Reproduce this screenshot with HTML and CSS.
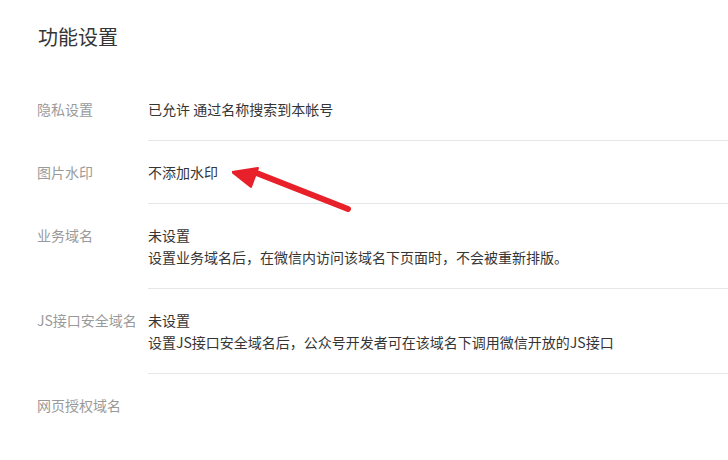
FILE: index.html
```html
<!DOCTYPE html>
<html lang="zh-CN">
<head>
  <meta charset="UTF-8" />
  <title>功能设置</title>
  <link rel="stylesheet" href="styles.css">
</head>
<body>
  <main class="page">
    <h2 class="page-title">功能设置</h2>

    <ul class="setting-list">
      <li class="setting-item">
        <span class="setting-label">隐私设置</span>
        <div class="setting-value">
          <p>已允许 通过名称搜索到本帐号</p>
        </div>
      </li>
      <li class="setting-item">
        <span class="setting-label">图片水印</span>
        <div class="setting-value">
          <p>不添加水印</p>
        </div>
        <!-- annotation arrow -->
        <svg class="mark-arrow" width="130" height="50" viewBox="0 0 130 50">
          <line x1="22" y1="9" x2="116" y2="46" stroke="#e8202a" stroke-width="6" stroke-linecap="round" />
          <polygon points="0,9 26,5 19,24" fill="#e8202a" stroke="#e8202a" stroke-width="2" stroke-linejoin="round" />
        </svg>
      </li>
      <li class="setting-item">
        <span class="setting-label">业务域名</span>
        <div class="setting-value">
          <p>未设置</p>
          <p>设置业务域名后，在微信内访问该域名下页面时，不会被重新排版。</p>
        </div>
      </li>
      <li class="setting-item">
        <span class="setting-label">JS接口安全域名</span>
        <div class="setting-value">
          <p>未设置</p>
          <p>设置JS接口安全域名后，公众号开发者可在该域名下调用微信开放的JS接口</p>
        </div>
      </li>
      <li class="setting-item last">
        <span class="setting-label">网页授权域名</span>
        <div class="setting-value"></div>
      </li>
    </ul>
  </main>
</body>
</html>
```

FILE: styles.css
```css
body {
  margin: 0;
  padding: 0;
  font-family: "Noto Sans CJK SC", "Microsoft YaHei", sans-serif;
  font-size: 14px;
  color: #353535;
  background: #fff;
}
.page {
  padding: 24px 0 0 38px;
}
.page-title {
  margin: 0;
  font-size: 20px;
  font-weight: normal;
  line-height: 26px;
  color: #353535;
}
.setting-list {
  list-style: none;
  margin: 28px 0 0;
  padding: 0;
}
.setting-item {
  position: relative;
  display: flex;
}
.setting-label {
  width: 111px;
  flex-shrink: 0;
  padding-top: 20px;
  line-height: 22px;
  color: #9a9a9a;
  margin-left: -1px;
}
.setting-value {
  flex: 1;
  min-height: 22px;
  padding: 20px 0;
  border-bottom: 1px solid #e4e8eb;
}
.setting-item.last .setting-value {
  border-bottom: none;
}
.setting-value p {
  margin: 0;
  line-height: 22px;
}
.mark-arrow {
  position: absolute;
  left: 194px;
  top: 22px;
}
```
